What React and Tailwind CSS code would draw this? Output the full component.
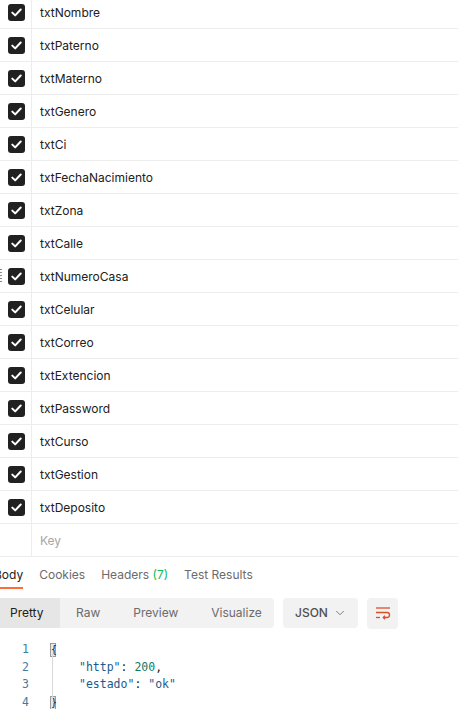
import { ChevronDown } from "lucide-react";

const fields = [
  "txtNombre",
  "txtPaterno",
  "txtMaterno",
  "txtGenero",
  "txtCi",
  "txtFechaNacimiento",
  "txtZona",
  "txtCalle",
  "txtNumeroCasa",
  "txtCelular",
  "txtCorreo",
  "txtExtencion",
  "txtPassword",
  "txtCurso",
  "txtGestion",
  "txtDeposito",
];

const Check = () => (
  <span className="flex h-[17px] w-[17px] items-center justify-center rounded-[3px] bg-[#212121]">
    <svg width="11" height="9" viewBox="0 0 11 9" fill="none">
      <path d="M1.3 4.6 L4.2 7.4 L9.7 1.5" stroke="white" strokeWidth="2" strokeLinecap="round" strokeLinejoin="round" />
    </svg>
  </span>
);

const Row = ({ name, handle }) => (
  <div className="relative flex h-[33px] border-b border-[#ededed]">
    {handle && (
      <span className="absolute left-0 top-[9px] flex flex-col gap-[2px]">
        {[0, 1, 2, 3, 4].map((i) => (
          <span key={i} className="h-[1px] w-[2px] bg-[#8a8a8a]" />
        ))}
      </span>
    )}
    <div className="flex w-[32px] items-center border-r border-[#ededed] pl-2">
      <Check />
    </div>
    <div className="flex items-center pl-2 pt-[2px] text-[12px] text-[#212121]">{name}</div>
  </div>
);

const WrapIcon = () => (
  <svg width="16" height="16" viewBox="0 0 16 16" fill="none" stroke="#d8512a" strokeWidth="1.3">
    <path d="M1 3h14" />
    <path d="M1 7.5h11a2.5 2.5 0 0 1 0 5H8.5" />
    <path d="M10 10.8 8.3 12.5 10 14.2" />
    <path d="M1 12.5h4" />
  </svg>
);

export default function App() {
  return (
    <div className="h-[709px] w-[458px] overflow-hidden bg-white font-['Inter',sans-serif]">
      <div className="-mt-[4px]">
        {fields.map((f) => (
          <Row key={f} name={f} handle={f === "txtNumeroCasa"} />
        ))}
        <div className="flex h-[33px] border-b border-[#ededed]">
          <div className="w-[32px] border-r border-[#ededed]" />
          <div className="flex items-center pl-2 pt-[2px] text-[12px] text-[#a6a6a6]">Key</div>
        </div>
      </div>

      <div className="flex h-[32px] items-center gap-4 pt-[3px] text-[12px] text-[#6b6b6b]">
        <div className="relative -ml-[6px] flex h-full items-center text-[#212121]">
          Body
          <span className="absolute bottom-0 left-0 right-0 h-[2px] bg-[#ff6c37]" />
        </div>
        <span>Cookies</span>
        <span>
          Headers <span className="text-[#0cbb52]">(7)</span>
        </span>
        <span>Test Results</span>
      </div>

      <div className="mt-[9px] flex h-[30px] items-center text-[12px] text-[#6b6b6b]">
        <div className="flex h-full w-[274px] overflow-hidden rounded-r-[4px] bg-[#f2f2f2]">
          <div className="flex w-[60px] items-center bg-[#e6e6e6] pl-[10px] text-[#212121]">Pretty</div>
          <div className="flex items-center pl-[16px]">Raw</div>
          <div className="flex items-center pl-[33px]">Preview</div>
          <div className="flex items-center pl-[33px]">Visualize</div>
        </div>
        <div className="ml-[9px] flex h-full w-[75px] items-center justify-between rounded-[4px] bg-[#f2f2f2] pl-[12px] pr-[11px] text-[12px] font-medium text-[#505050]">
          JSON
          <ChevronDown size={14} strokeWidth={1.5} className="text-[#6b6b6b]" />
        </div>
        <div className="ml-[9px] flex h-[31px] w-[31px] items-center justify-center rounded-[4px] bg-[#f2f2f2]">
          <WrapIcon />
        </div>
      </div>

      <div className="mt-[13px] flex font-['DejaVu_Sans_Mono',monospace] text-[11.5px] leading-[17.7px]">
        <div className="w-[29px] text-right text-[#3e7ea6]">
          <div>1</div>
          <div>2</div>
          <div>3</div>
          <div>4</div>
        </div>
        <div className="relative ml-[21px] flex flex-col">
          <span className="absolute left-[2px] top-[13px] h-[45px] w-[1px] bg-[#d9d9d9]" />
          <div>
            <span className="inline-block h-[14px] w-[6px] border border-[#9a9a9a] bg-[#e8e8e8] align-middle text-[10px] leading-[12px] text-[#212121]">{"{"}</span>
          </div>
          <div className="pl-[29px]">
            <span className="text-[#1c5a8c]">"http"</span>
            <span className="text-[#212121]">: </span>
            <span className="text-[#0e7b6a]">200</span>
            <span className="text-[#212121]">,</span>
          </div>
          <div className="pl-[29px]">
            <span className="text-[#1c5a8c]">"estado"</span>
            <span className="text-[#212121]">: </span>
            <span className="text-[#1c5a8c]">"ok"</span>
          </div>
          <div>
            <span className="inline-block h-[14px] w-[6px] border border-[#9a9a9a] bg-[#e8e8e8] align-middle text-[10px] leading-[12px] text-[#212121]">{"}"}</span>
          </div>
        </div>
      </div>
    </div>
  );
}
